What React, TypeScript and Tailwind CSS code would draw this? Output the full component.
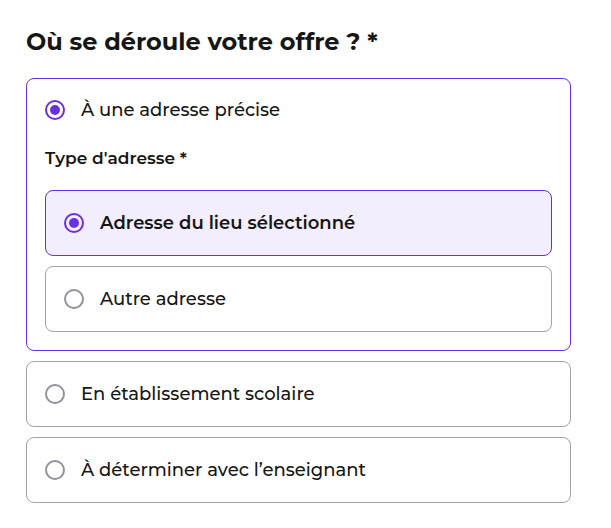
const font = { fontFamily: "Montserrat, 'DejaVu Sans', 'Open Sans', sans-serif" };

function Radio({ checked }: { checked?: boolean }) {
  return checked ? (
    <span className="flex h-5 w-5 shrink-0 items-center justify-center rounded-full border-2 border-[#6b2ee0]">
      <span className="h-[10px] w-[10px] rounded-full bg-[#6b2ee0]" />
    </span>
  ) : (
    <span className="h-5 w-5 shrink-0 rounded-full border-2 border-[#90939b] bg-white" />
  );
}

function Option({
  label,
  checked,
  bold,
}: {
  label: string;
  checked?: boolean;
  bold?: boolean;
}) {
  return (
    <div
      className={
        checked
          ? "flex h-[66px] items-center gap-[16px] rounded-lg border border-[#6b2ee0] bg-[#f3eefe] px-[18px]"
          : "flex h-[66px] items-center gap-[16px] rounded-lg border border-[#a0a3a9] bg-white px-[18px]"
      }
    >
      <Radio checked={checked} />
      <span
        className={
          bold
            ? "text-[18px] font-semibold leading-6 text-[#161616]"
            : "text-[18px] font-medium leading-6 text-[#161616]"
        }
      >
        {label}
      </span>
    </div>
  );
}

export default function App() {
  return (
    <div className="min-h-[528px] bg-white px-[26px] pt-[26px]" style={font}>
      <h2 className="text-[24px] font-bold leading-8 text-[#161616]">Où se déroule votre offre ? *</h2>
      <div className="mt-[20px] flex w-[545px] flex-col gap-[10px]">
        <div className="rounded-lg border border-[#6b2ee0] px-[18px] pb-[18px] pt-[19px]">
          <div className="flex items-center gap-[16px]">
            <Radio checked />
            <span className="text-[18px] font-medium leading-6 text-[#161616]">À une adresse précise</span>
          </div>
          <p className="mt-[24px] text-[17px] font-semibold leading-6 text-[#161616]">Type d'adresse *</p>
          <div className="mt-[20px] flex flex-col gap-[10px]">
            <Option label="Adresse du lieu sélectionné" checked bold />
            <Option label="Autre adresse" />
          </div>
        </div>
        <Option label="En établissement scolaire" />
        <Option label="À déterminer avec l’enseignant" />
      </div>
    </div>
  );
}
